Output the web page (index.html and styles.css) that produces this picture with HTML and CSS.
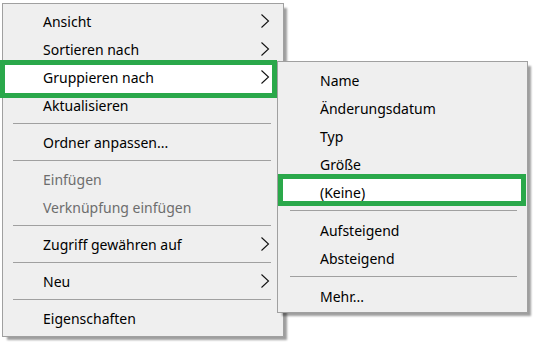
FILE: index.html
```html
<!DOCTYPE html>
<html lang="de">
<head>
<meta charset="UTF-8">
<title>Kontextmenü</title>
<link rel="stylesheet" href="styles.css">
</head>
<body>
<div class="desktop">
    <div class="menu main-menu">
        <div class="item"><span class="label">Ansicht</span><svg class="arrow" width="10" height="16" viewBox="0 0 10 16"><polyline points="1.5,1.5 8.5,8 1.5,14.5"/></svg></div>
        <div class="item"><span class="label">Sortieren nach</span><svg class="arrow" width="10" height="16" viewBox="0 0 10 16"><polyline points="1.5,1.5 8.5,8 1.5,14.5"/></svg></div>
        <div class="item active"><span class="label">Gruppieren nach</span><svg class="arrow" width="10" height="16" viewBox="0 0 10 16"><polyline points="1.5,1.5 8.5,8 1.5,14.5"/></svg></div>
        <div class="item"><span class="label">Aktualisieren</span></div>
        <div class="sep"></div>
        <div class="item"><span class="label">Ordner anpassen...</span></div>
        <div class="sep"></div>
        <div class="item disabled"><span class="label">Einfügen</span></div>
        <div class="item disabled"><span class="label">Verknüpfung einfügen</span></div>
        <div class="sep"></div>
        <div class="item"><span class="label">Zugriff gewähren auf</span><svg class="arrow" width="10" height="16" viewBox="0 0 10 16"><polyline points="1.5,1.5 8.5,8 1.5,14.5"/></svg></div>
        <div class="sep"></div>
        <div class="item"><span class="label">Neu</span><svg class="arrow" width="10" height="16" viewBox="0 0 10 16"><polyline points="1.5,1.5 8.5,8 1.5,14.5"/></svg></div>
        <div class="sep"></div>
        <div class="item"><span class="label">Eigenschaften</span></div>
    </div>

    <div class="menu sub-menu">
        <div class="item"><span class="label">Name</span></div>
        <div class="item"><span class="label">Änderungsdatum</span></div>
        <div class="item"><span class="label">Typ</span></div>
        <div class="item"><span class="label">Größe</span></div>
        <div class="item active"><span class="label">(Keine)</span></div>
        <div class="sep"></div>
        <div class="item"><span class="label">Aufsteigend</span></div>
        <div class="item"><span class="label">Absteigend</span></div>
        <div class="sep"></div>
        <div class="item"><span class="label">Mehr...</span></div>
    </div>
</div>
</body>
</html>
```

FILE: styles.css
```css
body {
    margin: 0;
    padding: 0;
    background-color: #fff;
    font-family: 'Noto Sans', 'Open Sans', sans-serif;
    font-size: 14px;
    color: #000;
}

.desktop {
    position: relative;
    width: 535px;
    height: 345px;
    padding-top: 3px;
    box-sizing: border-box;
}

.menu {
    background-color: #efefef;
    border: 1px solid #a0a0a0;
    box-shadow: 4px 4px 2px -1px rgba(0, 0, 0, 0.38);
}

.main-menu {
    width: 280px;
    margin-left: 2px;
    padding: 3px 0 4px;
}

/* submenu opens over the main menu */
.sub-menu {
    position: absolute;
    left: 277px;
    top: 61px;
    width: 249px;
    padding: 4px 0 2px;
}

.item {
    position: relative;
    display: flex;
    align-items: center;
    height: 28px;
    padding: 0 13px 0 40px;
}

.sub-menu .item {
    padding-left: 42px;
}

.item .label {
    position: relative;
    flex: 1;
    white-space: nowrap;
}

.item.disabled {
    color: #6d6d6d;
}

.arrow {
    position: relative;
    fill: none;
    stroke: #111;
    stroke-width: 1.1;
}

.sep {
    height: 1px;
    margin: 4px 12px 4px 10px;
    background-color: #a0a0a0;
}

.sub-menu .sep {
    margin: 4px 10px 5px 12px;
}

.item.active::before {
    content: "";
    position: absolute;
    top: -3px;
    bottom: -7px;
    left: -3px;
    right: 6px;
    background-color: #fff;
    border: 5px solid #2aa84a;
}

.sub-menu .item.active::before {
    top: -4px;
    bottom: 0;
    left: 0;
    right: 1px;
}
```
